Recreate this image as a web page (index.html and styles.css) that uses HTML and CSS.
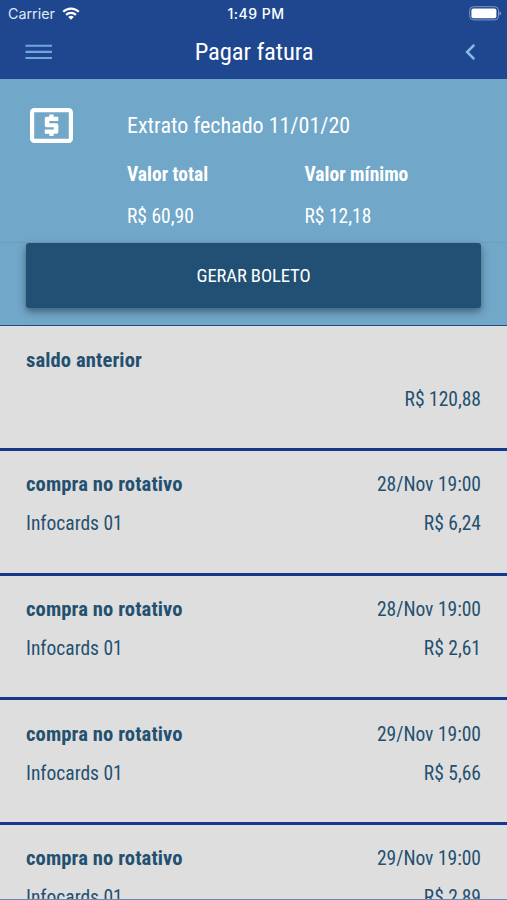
FILE: index.html
```html
<!DOCTYPE html>
<html lang="pt-BR">
<head>
<meta charset="utf-8">
<title>Pagar fatura</title>
<link rel="stylesheet" href="styles.css">
</head>
<body>
<header class="top">
  <div class="status">
    <div class="carrier"><span>Carrier</span>
      <svg width="18" height="13" viewBox="0 0 18 13"><g fill="none" stroke="#fff" stroke-width="2.2"><path d="M1.2 4.8a11.1 11.1 0 0 1 15.6 0"/><path d="M4.1 7.9a7 7 0 0 1 9.8 0"/></g><path fill="#fff" d="M6.2 10a4 4 0 0 1 5.6 0L9 12.8z"/></svg>
    </div>
    <div class="clock">1:49 PM</div>
    <svg class="battery" width="33" height="15" viewBox="0 0 33 15"><rect x=".7" y=".7" width="28.8" height="13.2" rx="3.8" fill="none" stroke="#7f98c4" stroke-width="1"/><rect x="2.4" y="2.4" width="25" height="9.8" rx="2" fill="#fff"/><path fill="#7f98c4" d="M30.5 5.2q1.7.8 1.7 2.2t-1.7 2.2z"/></svg>
  </div>
  <div class="nav">
    <svg width="27" height="16" viewBox="0 0 27 16"><path d="M.5 1.7h26.5M.5 7.9h26.5M.5 14h26.5" stroke="#71a8da" stroke-width="2.1"/></svg>
    <h1>Pagar fatura</h1>
    <svg width="12" height="16" viewBox="0 0 12 16"><path d="M9.3.8L2.1 8l7.2 7.2" fill="none" stroke="#83bce4" stroke-width="2.5"/></svg>
  </div>
</header>
<section class="summary">
  <svg class="bill" width="43" height="35" viewBox="0 0 43 35"><rect x="2.1" y="2.1" width="38.8" height="30.8" rx="2.2" fill="none" stroke="#fff" stroke-width="4.2"/><path fill="#fff" d="M19.3 6.4h4.3v2.3h4.7v4.3h-9v2.3h7.3q1.7 0 1.7 1.7v7q0 1.7-1.7 1.7h-3V28h-4.3v-2.3h-4.5v-4.3h9v-2.2h-7.4q-1.6 0-1.6-1.6v-7.2q0-1.7 1.6-1.7h2.9z"/></svg>
  <div class="info">
    <h2>Extrato fechado 11/01/20</h2>
    <dl>
      <div><dt>Valor total</dt><dd>R$ 60,90</dd></div>
      <div><dt>Valor mínimo</dt><dd>R$ 12,18</dd></div>
    </dl>
  </div>
</section>
<div class="action"><button>GERAR BOLETO</button></div>
<ul class="list">
  <li><div><b>saldo anterior</b></div><div class="end"><span>R$ 120,88</span></div></li>
  <li><div><b>compra no rotativo</b><span>28/Nov 19:00</span></div><div><span>Infocards 01</span><span>R$ 6,24</span></div></li>
  <li><div><b>compra no rotativo</b><span>28/Nov 19:00</span></div><div><span>Infocards 01</span><span>R$ 2,61</span></div></li>
  <li><div><b>compra no rotativo</b><span>29/Nov 19:00</span></div><div><span>Infocards 01</span><span>R$ 5,66</span></div></li>
  <li><div><b>compra no rotativo</b><span>29/Nov 19:00</span></div><div><span>Infocards 01</span><span>R$ 2,89</span></div></li>
</ul>
</body>
</html>
```
FILE: styles.css
```css
* { box-sizing: border-box; margin: 0; padding: 0; }
html { overflow: hidden; }
body {
  width: 507px; height: 900px; overflow: hidden;
  display: flex; flex-direction: column;
  font-family: "Roboto Condensed", Roboto, sans-serif;
  font-stretch: 75%;
  background: #dedede; color: #245070;
}
svg { display: block; flex: none; }
.top { height: 79px; flex: none; background: #1f4790; color: #fff; }
.status {
  height: 27px; padding: 0 5px 0 8px;
  display: grid; grid-template-columns: 1fr auto 1fr; align-items: center;
  font: 14.3px/27px Inter, sans-serif; font-stretch: 100%;
}
.carrier { display: flex; align-items: center; gap: 7px; color: #dfe7f5; }
.clock { font-weight: 500; font-size: 14px; letter-spacing: .5px; padding-left: 2px; }
.battery { justify-self: end; }
.nav { height: 50px; padding: 0 30px 0 25px; display: flex; align-items: center; justify-content: space-between; }
.nav h1 { font-size: 24.6px; letter-spacing: -.1px; font-weight: 400; margin: 0 0 2px -9px; }
.summary { height: 164px; flex: none; display: flex; background: #71a7c9; color: #fff; padding: 29px 30px 0; border-bottom: 1px solid #6b9fbf; }
.info { margin-left: 54px; flex: 1; }
.info h2 { font-size: 22px; font-weight: 400; line-height: 36px; }
.info dl { display: flex; margin-top: 10px; font-size: 19.5px; }
.info dl div { width: 177.5px; flex: none; }
.info dt { font-weight: 700; line-height: 42px; }
.info dd { line-height: 42px; }
.action { height: 82.4px; flex: none; background: #71a7c9; padding: 0 26px; }
.action button {
  display: block; width: 100%; height: 65px; border: 0; border-radius: 3px;
  font: inherit; font-size: 18.6px; letter-spacing: -.1px; color: #fff; background: #215074;
  box-shadow: 0 3px 4px rgba(0,0,0,.15), 0 4px 10px rgba(0,0,0,.3);
  position: relative;
}
.list { list-style: none; flex: 1; min-height: 0; overflow: hidden; border-top: 1px solid #254b80; border-bottom: 1px solid #6f87b8; font-size: 19.5px; }
.list li { height: 124.6px; padding: 14.4px 26px 0; border-bottom: 3px solid #17388a; }
.list li div { display: flex; justify-content: space-between; line-height: 39px; }
.list li .end { justify-content: flex-end; }
.list b { font-weight: 700; font-size: 20.6px; letter-spacing: .1px; }
```
